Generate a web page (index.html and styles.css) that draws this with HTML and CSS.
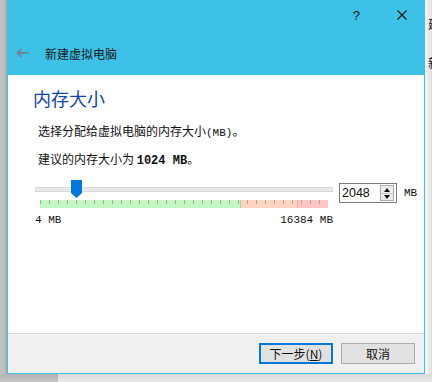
FILE: index.html
```html
<!DOCTYPE html>
<html lang="zh-CN">
<head>
<meta charset="utf-8">
<title>新建虚拟电脑</title>
<link rel="stylesheet" href="styles.css">
</head>
<body>
<div class="desk">
  <div class="row">
    <div class="shadow-left"></div>
    <div class="window">
      <div class="header">
        <div class="caption">
          <span class="help">?</span>
          <svg class="close" width="10" height="10" viewBox="0 0 10 10"><path d="M0.5 0.5L9.5 9.5M9.5 0.5L0.5 9.5" stroke="#111" stroke-width="1.1" fill="none"/></svg>
        </div>
        <div class="titlebar">
          <svg class="back" width="13" height="10" viewBox="0 0 13 10"><path d="M12.5 5H1.5M5.5 1L1.5 5L5.5 9" stroke="#6d8894" stroke-width="1.8" fill="none"/></svg>
          <span class="wtitle">新建虚拟电脑</span>
        </div>
      </div>
      <div class="content">
        <h1 class="page-title">内存大小</h1>
        <p class="desc first">选择分配给虚拟电脑的内存大小<span class="lat">(MB)</span>。</p>
        <p class="desc">建议的内存大小为 <b class="lat bold">1024 MB</b>。</p>
        <div class="mem-row">
          <div class="slider">
            <div class="track"></div>
            <div class="ticks"></div>
            <div class="thumb"></div>
            <div class="limits"><span class="lat">4 MB</span><span class="lat">16384 MB</span></div>
          </div>
          <div class="spin">
            <span class="spin-value">2048</span>
            <div class="spin-btns">
              <span class="up"></span>
              <span class="sep"></span>
              <span class="down"></span>
            </div>
          </div>
          <span class="unit lat">MB</span>
        </div>
      </div>
      <div class="footer">
        <button class="btn default">下一步(<u>N</u>)</button>
        <button class="btn">取消</button>
      </div>
    </div>
    <div class="shadow-right">
      <span class="bg-text t1">建</span>
      <span class="bg-text t2">新</span>
    </div>
  </div>
  <div class="bottom">
    <div class="bottom-dark"></div>
    <div class="bottom-light"></div>
  </div>
</div>
</body>
</html>
```
FILE: styles.css
```css
* { box-sizing: border-box; }
html, body { margin: 0; padding: 0; }
body {
  width: 432px;
  height: 382px;
  overflow: hidden;
  font-family: "Noto Sans CJK SC", sans-serif;
  font-size: 12px;
  color: #111;
  background: #d9d9d9;
}
.desk { width: 432px; height: 382px; display: flex; flex-direction: column; }
.row { display: flex; height: 374px; }
.shadow-left {
  width: 7px;
  background: linear-gradient(to right, #c4c4c4, #bdbdbd 60%, #a9a9a9);
}
.window {
  width: 418px;
  height: 374px;
  border: 1px solid #3bbfe5;
  border-top: none;
  display: flex;
  flex-direction: column;
  background: #fff;
}
.header {
  height: 75px;
  background: #3dc1e7;
  margin: 0 -1px;
  padding: 0 1px;
}
.caption {
  height: 30px;
  display: flex;
  align-items: center;
  justify-content: flex-end;
  padding-right: 17px;
  gap: 37px;
}
.help {
  font-family: "Liberation Sans", sans-serif;
  font-size: 13px;
  color: #111;
  line-height: 1;
  margin-top: 1px;
}
.close { display: block; }
.titlebar {
  display: flex;
  align-items: center;
  height: 20px;
  margin-top: 13px;
  padding-left: 8px;
}
.back { display: block; margin-right: 16px; }
.wtitle { font-size: 12px; color: #1a1a1a; }
.content {
  flex: 1;
  padding: 11px 0 0 25px;
}
.page-title {
  margin: 0;
  font-size: 18px;
  font-weight: normal;
  line-height: 24px;
  color: #1046a6;
}
.desc {
  margin: 10px 0 0 5px;
  line-height: 16px;
  font-size: 12px;
}
.desc.first { margin-top: 13px; }
.lat { font-family: "Liberation Mono", monospace; font-size: 11px; }
.bold { font-weight: bold; font-size: 12px; }
.mem-row {
  display: flex;
  align-items: flex-start;
  margin: 11px 0 0 2px;
}
.slider {
  position: relative;
  width: 298px;
  padding-top: 7px;
}
.track {
  height: 5px;
  border: 1px solid #d9d9d9;
  background: #e9e9e9;
}
.ticks {
  margin: 8px 0 0 5px;
  width: 288px;
  height: 8px;
  background:
    repeating-linear-gradient(to right, #a8a8a8 0 1px, transparent 1px 9px) 0 0 / 100% 4px no-repeat,
    linear-gradient(to right,
      #c5f7c2 0 200px,
      #a8d8a0 200px 201px,
      #ffd4c2 201px 257px,
      #e5a8a8 257px 258px,
      #ffc6c6 258px 288px);
}
.thumb {
  position: absolute;
  left: 36px;
  top: 0;
  width: 11px;
  height: 18px;
  background: #0078d7;
  clip-path: polygon(0 0, 100% 0, 100% 72%, 50% 100%, 0 72%);
}
.limits {
  display: flex;
  justify-content: space-between;
  margin-top: 6px;
  line-height: 12px;
  color: #111;
}
.spin {
  margin: 3px 0 0 6px;
  width: 58px;
  height: 20px;
  border: 1px solid #7a7a7a;
  background: #fff;
  display: flex;
  align-items: center;
  padding: 0 2px 0 2px;
}
.spin-value {
  flex: 1;
  font-family: "Liberation Sans", sans-serif;
  font-size: 12.5px;
  color: #111;
}
.spin-btns {
  width: 14px;
  height: 16px;
  border: 1px solid #acacac;
  background: #ececec;
  display: flex;
  flex-direction: column;
  align-items: center;
  justify-content: space-around;
  padding: 1px 0;
}
.sep { width: 100%; height: 1px; background: #c8c8c8; }
.up, .down {
  width: 0;
  height: 0;
  border-left: 3.5px solid transparent;
  border-right: 3.5px solid transparent;
}
.up { border-bottom: 4px solid #111; }
.down { border-top: 4px solid #111; }
.unit {
  margin: 7px 0 0 7px;
  line-height: 12px;
}
.footer {
  height: 40px;
  border-top: 1px solid #dadada;
  background: #f0f0f0;
  display: flex;
  justify-content: flex-end;
  align-items: flex-start;
  padding: 9px 9px 0 0;
  gap: 8px;
}
.btn {
  width: 74px;
  height: 21px;
  border: 1px solid #adadad;
  background: #e1e1e1;
  font-family: "Noto Sans CJK SC", sans-serif;
  font-size: 12px;
  color: #111;
  padding: 0;
  line-height: 18px;
}
.btn.default { border: 2px solid #0078d7; }
.btn u { text-decoration: underline; }
.shadow-right {
  position: relative;
  flex: 1;
  background: linear-gradient(to right, #f7f7f7 0 2px, #efefef 2px, #e2e2e2 90%, #d6d6d6);
  overflow: hidden;
}
.bg-text {
  position: absolute;
  left: 3px;
  font-size: 12px;
  color: #111;
}
.t1 { top: 15px; }
.t2 { top: 54px; }
.bottom { display: flex; height: 8px; }
.bottom-dark { width: 58px; background: linear-gradient(to bottom, #b3b3b3, #c4c4c4); }
.bottom-light { flex: 1; background: linear-gradient(to bottom, #d9d9d9, #e9e9e9); }
```
